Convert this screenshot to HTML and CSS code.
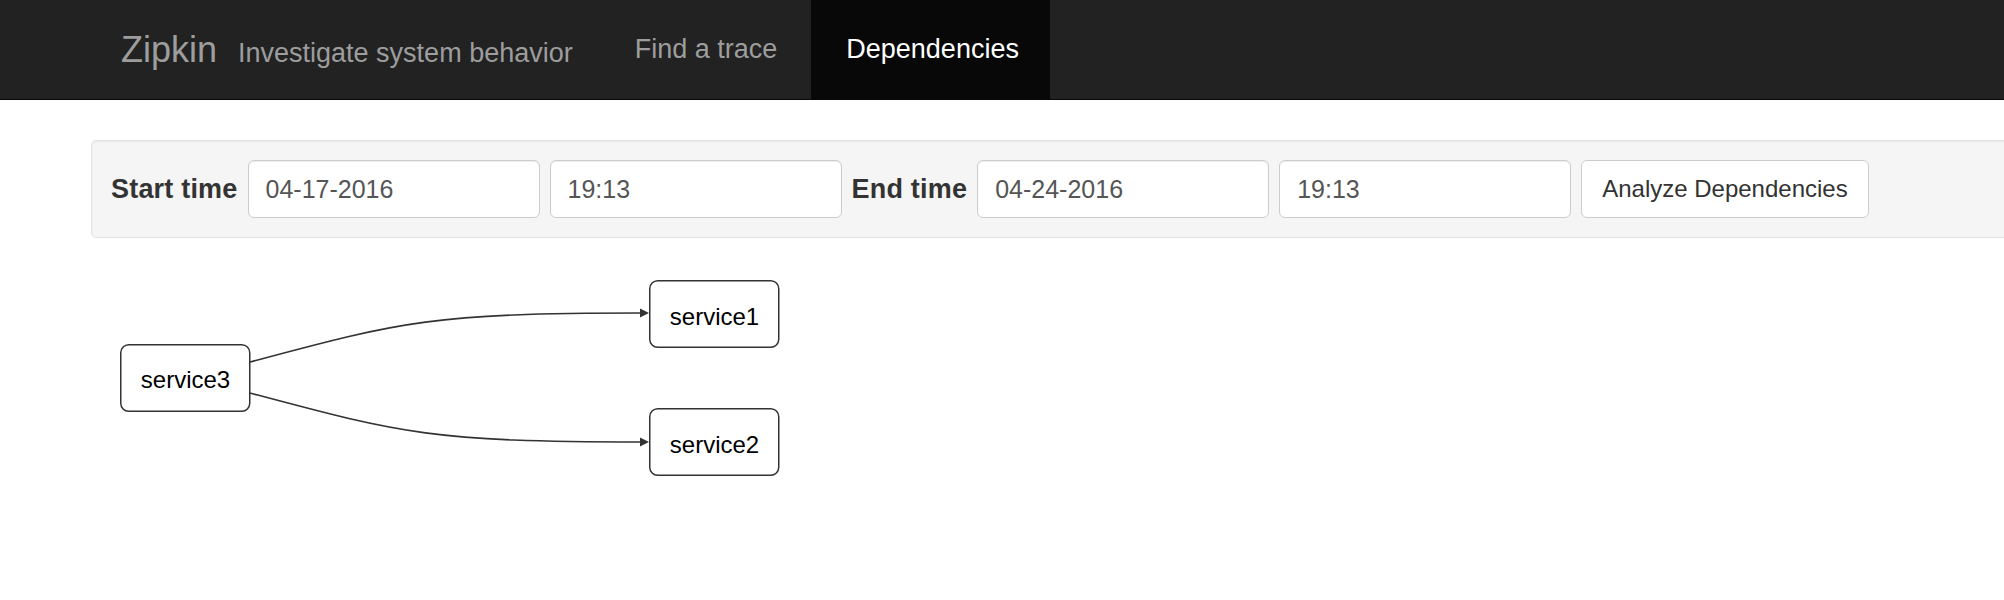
FILE: index.html
```html
<!DOCTYPE html>
<html lang="en">
<head>
<meta charset="utf-8">
<title>Zipkin - Dependencies</title>
<link rel="stylesheet" href="styles.css">
</head>
<body>
<header class="navbar">
  <div class="brand">
    <span class="brand-name">Zipkin</span>
    <span class="brand-tagline">Investigate system behavior</span>
  </div>
  <nav class="nav">
    <a class="nav-link" href="#">Find a trace</a>
    <a class="nav-link active" href="#">Dependencies</a>
  </nav>
</header>
<main class="main">
  <form class="well">
    <label class="field-label">Start time</label>
    <input class="field" type="text" value="04-17-2016">
    <input class="field" type="text" value="19:13">
    <label class="field-label">End time</label>
    <input class="field" type="text" value="04-24-2016">
    <input class="field" type="text" value="19:13">
    <button class="btn" type="button">Analyze Dependencies</button>
  </form>
  <div class="graph">
    <svg class="graph-svg" width="900" height="260" viewBox="0 0 900 260">
      <path class="edge" d="M159,102 C309,62 339,53 550,53"></path>
      <polygon class="arrow" points="558,53 549,48.5 549,57.5"></polygon>
      <path class="edge" d="M159,133 C309,173 339,182 550,182"></path>
      <polygon class="arrow" points="558,182 549,177.5 549,186.5"></polygon>
      <g class="node">
        <rect x="29.75" y="84.75" width="129" height="66.5" rx="8" ry="8"></rect>
        <text x="94.5" y="128">service3</text>
      </g>
      <g class="node">
        <rect x="558.75" y="20.75" width="129" height="66.5" rx="8" ry="8"></rect>
        <text x="623.5" y="65">service1</text>
      </g>
      <g class="node">
        <rect x="558.75" y="148.75" width="129" height="66.5" rx="8" ry="8"></rect>
        <text x="623.5" y="192.5">service2</text>
      </g>
    </svg>
  </div>
</main>
</body>
</html>
```
FILE: styles.css
```css
html, body {
  margin: 0;
  padding: 0;
  background: #fff;
  overflow: hidden;
}
body {
  font-family: "Liberation Sans", Arial, sans-serif;
  color: #333;
}

/* Navbar */
.navbar {
  display: flex;
  align-items: stretch;
  height: 99px;
  background: #222;
  border-bottom: 1px solid #080808;
  padding-left: 121px;
}
.brand {
  display: flex;
  align-items: baseline;
  align-self: center;
  gap: 21px;
  color: #9d9d9d;
}
.brand-name {
  font-size: 36px;
}
.brand-tagline {
  font-size: 27px;
}
.nav {
  display: flex;
  margin-left: 29px;
}
.nav-link {
  display: flex;
  align-items: center;
  padding: 0 34px 0 33px;
  font-size: 27px;
  color: #9d9d9d;
  text-decoration: none;
}
.nav-link.active {
  background: #080808;
  color: #fff;
  padding: 0 31px 0 35px;
}

/* Main */
.main {
  padding-left: 91px;
}
.well {
  display: flex;
  align-items: center;
  margin: 40px -20px 0 0;
  padding: 19px;
  background: #f5f5f5;
  border: 1px solid #e3e3e3;
  border-radius: 5px;
  box-shadow: inset 0 1px 2px rgba(0, 0, 0, 0.06);
}
.field-label {
  font-size: 27px;
  font-weight: bold;
  letter-spacing: 0.2px;
  color: #333;
  margin-right: 10px;
}
.field {
  box-sizing: border-box;
  width: 292px;
  height: 58px;
  margin: 0 10px 0 0;
  padding: 0 17px;
  font-family: "Liberation Sans", Arial, sans-serif;
  font-size: 25px;
  color: #555;
  background: #fff;
  border: 1px solid #ccc;
  border-radius: 6px;
  box-shadow: inset 0 1px 1px rgba(0, 0, 0, 0.075);
  outline: none;
}
.btn {
  box-sizing: border-box;
  height: 58px;
  padding: 0 20px;
  font-family: "Liberation Sans", Arial, sans-serif;
  font-size: 24px;
  color: #333;
  background: #fff;
  border: 1px solid #ccc;
  border-radius: 6px;
}

/* Graph */
.graph {
  margin-top: 22px;
}
.graph-svg {
  display: block;
}
.edge {
  fill: none;
  stroke: #333;
  stroke-width: 1.6;
}
.arrow {
  fill: #333;
}
.node rect {
  fill: #fff;
  stroke: #333;
  stroke-width: 1.5;
}
.node text {
  font-family: "Liberation Sans", Arial, sans-serif;
  font-size: 24px;
  fill: #000;
  text-anchor: middle;
}
```
